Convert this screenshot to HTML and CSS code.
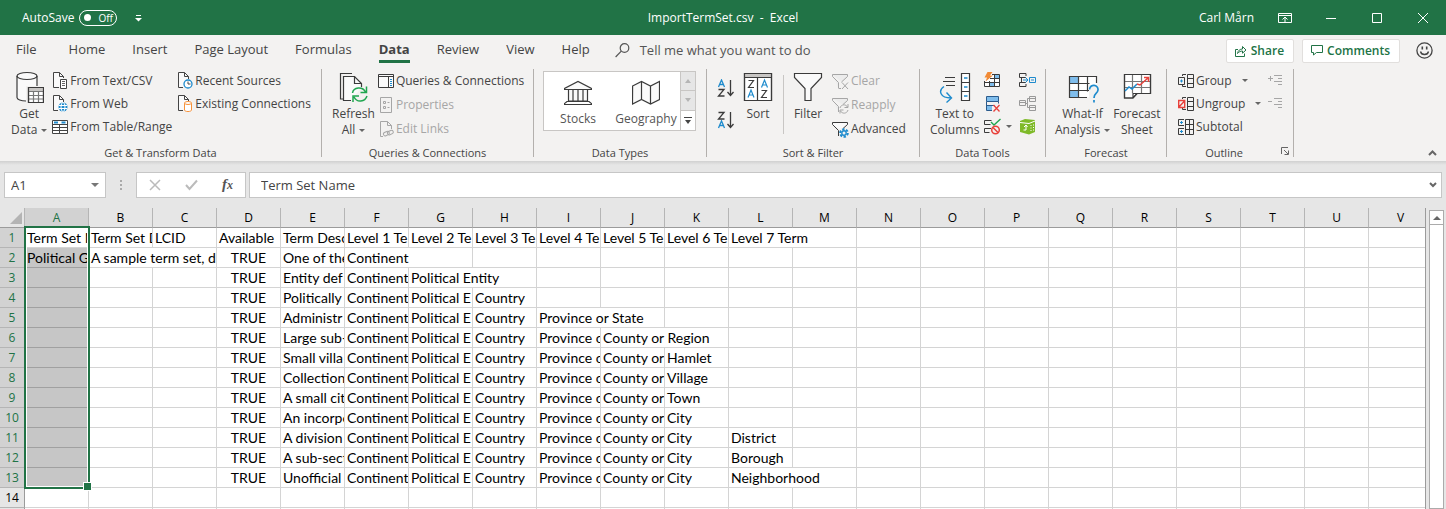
FILE: index.html
```html
<!DOCTYPE html>
<html lang="en">
<head>
    <meta charset="UTF-8">
    <meta name="viewport" content="width=device-width, initial-scale=1.0">
    <title>ImportTermSet.csv - Excel</title>
    <link rel="stylesheet" href="styles.css">
</head>
<body>
<header class="titlebar">
    <div class="titlebar-left">
        <label for="autosave">AutoSave</label>
        <span class="toggle"><input type="checkbox" id="autosave"><span>Off</span></span>
        <button class="qat" aria-label="Customize Quick Access Toolbar">
            <svg width="7" height="8" viewBox="0 0 7 8"><path d="M1 1.500h5" stroke="#fff"/><path d="M0 4h7L3.500 7.500z" fill="#fff"/></svg>
        </button>
    </div>
    <div class="titlebar-name">ImportTermSet.csv&nbsp; -&nbsp; Excel</div>
    <div class="titlebar-right">
        <span class="user">Carl Mårn</span>
        <button aria-label="Ribbon display options">
            <svg width="14" height="12" viewBox="0 0 14 12" fill="none" stroke="#fff"><path d="M.5 1.500h13v9H.5zM.5 3.500h13M7 10V5M4.500 7.500L7 5l2.500 2.500"/></svg>
        </button>
        <button aria-label="Minimize"><svg width="10" height="10" viewBox="0 0 10 10"><path d="M0 5.500h10" stroke="#fff"/></svg></button>
        <button aria-label="Maximize"><svg width="10" height="10" viewBox="0 0 10 10"><path d="M.5.5h9v9h-9z" stroke="#fff" fill="none"/></svg></button>
        <button aria-label="Close"><svg width="10" height="10" viewBox="0 0 10 10"><path d="M0 0l10 10M10 0L0 10" stroke="#fff"/></svg></button>
    </div>
</header>

<nav class="tabs">
    <a href="#">File</a>
    <a href="#">Home</a>
    <a href="#">Insert</a>
    <a href="#">Page Layout</a>
    <a href="#">Formulas</a>
    <a href="#" class="active">Data</a>
    <a href="#">Review</a>
    <a href="#">View</a>
    <a href="#">Help</a>
    <button class="tell-me">
        <svg width="15" height="15" viewBox="0 0 15 15" fill="none" stroke="#555" stroke-width="1.200"><circle cx="9.500" cy="5" r="4.300"/><path d="M6.300 8.200L.6 14"/></svg>
        Tell me what you want to do
    </button>
    <div class="tabs-right">
        <button class="card">
            <svg width="12" height="12" viewBox="0 0 12 12" fill="none" stroke="#217346"><path d="M3 4.500H.5v7h9V8.500"/><path d="M2.500 8.500C3 5.500 5 4 7.500 4V1.500L11 5 7.500 8.200V6C5.500 6 4 6.800 2.500 8.500z"/></svg>
            Share
        </button>
        <button class="card">
            <svg width="12" height="11" viewBox="0 0 12 11" fill="none" stroke="#217346"><path d="M.5.5h11v7H5.500L2.500 10V7.500h-2z"/></svg>
            Comments
        </button>
        <button class="smile" aria-label="Feedback">
            <svg width="17" height="17" viewBox="0 0 17 17" fill="none" stroke="#444" stroke-width="1.300"><circle cx="8.500" cy="8.500" r="7.600"/><path d="M4.500 9.500c.8 4 7.200 4 8 0"/><path d="M6.300 4.500v3M10.700 4.500v3" stroke-width="1.600"/></svg>
        </button>
    </div>
</nav>

<div class="ribbon">
    <section class="group group-get">
        <div class="group-body">
            <button class="big">
                <svg width="30" height="32" viewBox="0 0 30 32" fill="none" stroke="#3b3b3b" stroke-width="1.200"><path d="M3 5v22c0 2 4 3.500 9 3.500V15h11V5z" fill="#fafafa" stroke="none"/><ellipse cx="13" cy="5" rx="10" ry="3.500" fill="#fafafa"/><path d="M3 5v21.500c0 2 4 3.500 9 3.500M23 5v10"/><path d="M14.500 16.500h15v15h-15z" fill="#fff"/><path d="M15 17h14v3H15z" fill="#c8c6c4" stroke="none"/><path d="M14 20.500h16M14 24.500h16M14 28h16M19.500 20v11M24.500 20v11" stroke="#777"/><path d="M14.500 16.500h15v15h-15z"/></svg>
                <span>Get</span><span class="drop">Data</span>
            </button>
            <div class="stack">
                <button class="small">
                    <svg width="16" height="17" viewBox="0 0 16 17" fill="none" stroke="#444"><path d="M7 15.500H1.500v-15h6l4 4V6" fill="#fafafa"/><path d="M7.500.5v4h4"/><path d="M8.500 7.500h6v9h-6z" fill="#fff"/><path d="M10 9.500h3M10 11.500h3M10 13.500h3" stroke="#666"/></svg>
                    From Text/CSV
                </button>
                <button class="small">
                    <svg width="16" height="17" viewBox="0 0 16 17" fill="none" stroke="#444"><path d="M6 15.500H1.500v-15h6l4 4V7" fill="#fafafa"/><path d="M7.500.5v4h4"/><circle cx="11" cy="12" r="4.500" fill="#1e8bcd" stroke="none"/><path d="M7 10.500h8M7 13.500h8" stroke="#fff"/><ellipse cx="11" cy="12" rx="2" ry="4.500" stroke="#fff"/></svg>
                    From Web
                </button>
                <button class="small">
                    <svg width="16" height="16" viewBox="0 0 16 16" fill="none" stroke="#444"><path d="M.5 1.500h15v13H.5z" fill="#fff"/><path d="M2 3.500h4M9.500 3.500h4" stroke="#1e8bcd" stroke-width="2"/><path d="M.5 5.500h15M.5 8.500h15M.5 11.500h15M7.500 5v9"/></svg>
                    From Table/Range
                </button>
            </div>
            <div class="stack">
                <button class="small">
                    <svg width="16" height="17" viewBox="0 0 16 17" fill="none" stroke="#444"><path d="M6 15.500H1.500v-15h6l4 4V7" fill="#fafafa"/><path d="M7.500.5v4h4"/><circle cx="11" cy="12" r="4" fill="#fff" stroke="#1e8bcd" stroke-width="1.300"/><path d="M11 9.500V12h2.500"/></svg>
                    Recent Sources
                </button>
                <button class="small">
                    <svg width="16" height="17" viewBox="0 0 16 17" fill="none" stroke="#444"><path d="M6 15.500H1.500v-15h6l4 4V6" fill="#fafafa"/><path d="M7.500.5v4h4"/><path d="M7.500 8v7c0 2 7 2 7 0V8" fill="#fff" stroke="#f7923a"/><ellipse cx="11" cy="8" rx="3.500" ry="1.500" fill="#fff" stroke="#f7923a"/></svg>
                    Existing Connections
                </button>
            </div>
        </div>
        <h2>Get &amp; Transform Data</h2>
    </section>

    <section class="group group-queries">
        <div class="group-body">
            <button class="big">
                <svg width="30" height="32" viewBox="0 0 30 32" fill="none" stroke="#3b3b3b" stroke-width="1.200"><path d="M5.500 28H2.500V2.500H14"/><path d="M13 29.500H5.500v-24h11l7 7V16" fill="#fafafa"/><path d="M16.500 5.500v7h7"/><path d="M14.500 22c1-6 10-7 13-1M28.500 15.500v6h-6M29 25c-2 6-10 7-13 1M15 31v-6h6" stroke="#20a650" stroke-width="1.500"/></svg>
                <span>Refresh</span><span class="drop">All</span>
            </button>
            <div class="stack loose">
                <button class="small">
                    <svg width="16" height="16" viewBox="0 0 16 16" fill="none" stroke="#3b3b3b"><path d="M.5 1.500h15v13H.5z" fill="#fafafa"/><path d="M.5 3.500h15M10.500 4v10"/><path d="M12 6.500h2M12 8.500h2M12 10.500h2M12 12.500h2" stroke="#1e8bcd"/></svg>
                    Queries &amp; Connections
                </button>
                <button class="small" disabled>
                    <svg width="16" height="16" viewBox="0 0 16 16" fill="none" stroke="#a6a6a6"><path d="M2.500.5h11v15h-11z"/><path d="M5.500 4.500h2v2h-2zM5.500 9.500h2v2h-2zM9.500 5.500h2M9.500 10.500h2"/></svg>
                    Properties
                </button>
                <button class="small" disabled>
                    <svg width="16" height="16" viewBox="0 0 16 16" fill="none" stroke="#a6a6a6"><path d="M5 15.500H2.500V.5h7l4 4V8"/><path d="M9.500.5v4h4"/><rect x="5.500" y="11" width="6" height="3.500" rx="1.700" transform="rotate(-25 8 13)"/><rect x="9.500" y="10" width="6" height="3.500" rx="1.700" transform="rotate(-25 12 12)"/></svg>
                    Edit Links
                </button>
            </div>
        </div>
        <h2>Queries &amp; Connections</h2>
    </section>

    <section class="group group-types">
        <div class="group-body">
            <div class="gallery">
                <button class="tile">
                    <svg width="28" height="26" viewBox="0 0 28 26" fill="none" stroke="#3b3b3b" stroke-width="1.200"><path d="M.5 9.500v-1L14 1.500l13.500 7v1zM4.500 10v11h19V10" fill="#fafafa"/><path d="M9 10v11M14 10v11M19 10v11M2.500 21.500h23M.5 24.500h27v-1L25 21.500H3L.5 23.500z"/></svg>
                    <span>Stocks</span>
                </button>
                <button class="tile">
                    <svg width="28" height="26" viewBox="0 0 28 26" fill="none" stroke="#3b3b3b" stroke-width="1.200"><path d="M.6 6L9.500 1.500 18.500 6l9-4.500v18l-9 4.500-9-4.500-9 4.500zM9.500 1.500v18M18.500 6v18" fill="#fafafa"/></svg>
                    <span>Geography</span>
                </button>
                <div class="gallery-scroll">
                    <button disabled aria-label="Previous row"><svg width="6" height="4" viewBox="0 0 6 4"><path d="M0 4l3-4 3 4z" fill="#b5b5b5"/></svg></button>
                    <button disabled aria-label="Next row"><svg width="6" height="4" viewBox="0 0 6 4"><path d="M0 0l3 4 3-4z" fill="#b5b5b5"/></svg></button>
                    <button aria-label="More data types"><svg width="8" height="7" viewBox="0 0 8 7"><path d="M0 .5h8" stroke="#444"/><path d="M1 3l3 4 3-4z" fill="#444"/></svg></button>
                </div>
            </div>
        </div>
        <h2>Data Types</h2>
    </section>

    <section class="group group-sort">
        <div class="group-body">
            <div class="sorts">
                <button aria-label="Sort A to Z">
                    <svg width="18" height="18" viewBox="0 0 18 18" fill="none" stroke="#3b3b3b" stroke-width="1.300"><path d="M1.500 8L4.500 1l3 7M2.500 5.500h4" stroke="#1e8bcd"/><path d="M1.500 10.500h5.500L1.500 17h6M13.500 1v15M10.500 13l3 3.500 3-3.500"/></svg>
                </button>
                <button aria-label="Sort Z to A">
                    <svg width="18" height="18" viewBox="0 0 18 18" fill="none" stroke="#3b3b3b" stroke-width="1.300"><path d="M1.500 17l3-7 3 7M2.500 14.500h4" stroke="#1e8bcd"/><path d="M1.500 1.500h5.500L1.500 8h6M13.500 1v15M10.500 13l3 3.500 3-3.500"/></svg>
                </button>
            </div>
            <button class="big">
                <svg width="30" height="32" viewBox="0 0 30 32" fill="none" stroke="#3b3b3b" stroke-width="1.200"><path d="M1.500 2.500h27v27h-27z" fill="#fff"/><path d="M2 3h26v3.500H2z" fill="#c8c6c4" stroke="none"/><path d="M1.500 2.500h27v27h-27zM1.500 6.500h27M14.500 7v23M5.500 9.500h5l-5 7h5.500M18.500 19.500h5l-5 7h5.500"/><path d="M5 26.500l3-7.500 3 7.500M6 24h4M18.500 16.500l3-7.500 3 7.500M19.500 14h4" stroke="#1e8bcd"/></svg>
                <span>Sort</span>
            </button>
            <div class="rule"></div>
            <button class="big">
                <svg width="30" height="32" viewBox="0 0 30 32"><path d="M1.500 2.500h27v4l-10.500 11v12h-6v-12L1.500 6.500z" fill="#fafafa" stroke="#3b3b3b" stroke-width="1.200"/></svg>
                <span>Filter</span>
            </button>
            <div class="stack loose">
                <button class="small" disabled>
                    <svg width="17" height="17" viewBox="0 0 17 17" fill="none" stroke="#a6a6a6"><path d="M.5 1.500h15v2L9.500 9M6.500 15V9.500L.5 3.500v-2M9 15.500H6.500" fill="#ececec"/><path d="M10 9.500l6 6.500M16 9.500L10 16"/></svg>
                    Clear
                </button>
                <button class="small" disabled>
                    <svg width="17" height="17" viewBox="0 0 17 17" fill="none" stroke="#a6a6a6"><path d="M.5 1.500h15v2L11 7.500M6.500 15V9.500L.5 3.500v-2" fill="#ececec"/><path d="M8 11c1-4 6-4 7.500-1M16 7v3.500h-3.500M16 13c-1 4-6 4-7.500 1M8 16.500V13h3.500"/></svg>
                    Reapply
                </button>
                <button class="small">
                    <svg width="17" height="17" viewBox="0 0 17 17" fill="none" stroke="#3b3b3b"><path d="M.5 1.500h15v2L11 7.500H6.500L.5 3.500z" fill="#fafafa" stroke="none"/><path d="M11 7.500l4.500-4v-2H.5v2l6 6V15"/><circle cx="12" cy="12" r="3.800" stroke="#1e8bcd" stroke-width="2" stroke-dasharray="2.400 1.500"/><circle cx="12" cy="12" r="2.200" stroke="#1e8bcd" stroke-width="1.400"/></svg>
                    Advanced
                </button>
            </div>
        </div>
        <h2>Sort &amp; Filter</h2>
    </section>

    <section class="group group-tools">
        <div class="group-body">
            <button class="big">
                <svg width="32" height="32" viewBox="0 0 32 32" fill="none" stroke="#3b3b3b" stroke-width="1.200"><path d="M6 6.500h10M4 10.500h12M7 14.500h9"/><path d="M22.500 2.500h8v27h-8z" fill="#fff"/><path d="M22.500 11.500h8M22.500 20.500h8"/><path d="M25 7h3.500M25 16h3.500M25 25h3.500M5 15.500c-6 4-4 11.500 7 11.500M7.500 21.500l5 5.500-5 4.500" stroke="#1e8bcd" stroke-width="1.400"/></svg>
                <span>Text to</span><span>Columns</span>
            </button>
            <div class="tools">
                <button aria-label="Flash Fill">
                    <svg width="17" height="17" viewBox="0 0 17 17" fill="none"><path d="M6.500 2.500h9v12h-15V9" fill="#fff"/><path d="M6 11h5v3H6zM11 3h4v3h-4z" fill="#7fbdec"/><path d="M8 2.500h7.500v12H.5V9M.5 10.500h15M6 6.500h9.500M5.500 9v5.500M10.500 2.500v12" stroke="#3b3b3b"/><path d="M3.500 0h5L6 3.500h3L1.500 9.500l1.500-4H.5z" fill="#f18a35"/></svg>
                </button>
                <button aria-label="Consolidate">
                    <svg width="17" height="17" viewBox="0 0 17 17" fill="none" stroke="#3b3b3b"><path d="M7 4V1.500H.5v4H7M7 12v2.500H.5v-4H7M2.500 5.500v5"/><path d="M4 8h5M6.500 5.500L9 8l-2.500 2.500M10.500 5.500h6v5h-6zM12 8h3" stroke="#1e8bcd"/></svg>
                </button>
                <button aria-label="Remove Duplicates">
                    <svg width="17" height="17" viewBox="0 0 17 17" fill="none"><path d="M3 2h11v5H3zM3 11h5v5H3z" fill="#7fbdec"/><path d="M2.500 1.500h12v5h-12zM2.500 6.500v9H8M2.500 10.500h8M14.500 6.500v2" stroke="#2b5b8c"/><path d="M9.500 10l6 6.500M15.500 10l-6 6.500" stroke="#e8413b" stroke-width="1.300"/></svg>
                </button>
                <button disabled aria-label="Relationships">
                    <svg width="17" height="17" viewBox="0 0 17 17" fill="none" stroke="#999"><path d="M.5 5.500h6v5h-6zM10.500 1.500h6v5h-6zM10.500 10.500h6v5h-6zM6.500 8.500H8.500V3.500h2M8.500 8.500v4h2M10.500 3.500h6M10.500 12.500h6M.5 7.500h6"/></svg>
                </button>
                <button class="drop" aria-label="Data Validation">
                    <svg width="17" height="17" viewBox="0 0 17 17" fill="none"><path d="M7.500 2.500h-7v4h6M7 10.500H.5v4h5" stroke="#3b3b3b"/><path d="M7 4l3 3 6.500-6" stroke="#20a650" stroke-width="1.400"/><circle cx="11.500" cy="12" r="3.800" stroke="#e8413b" stroke-width="1.500"/><path d="M9 9.500l5 5" stroke="#e8413b" stroke-width="1.500"/></svg>
                </button>
                <button aria-label="Manage Data Model">
                    <svg width="17" height="17" viewBox="0 0 17 17" fill="none"><path d="M1 3l5-2 10 1v12l-6 2.500L1 14z" fill="#7fba29"/><path d="M1 4.500l9 1 6-2.500M11.500 7.500h1M14 7h1M11.500 10h1M14 9.500h1M11.500 12.500h1M14 12h1M7 7v5H4.500M5 9l2-2 1.500 2" stroke="#fff"/></svg>
                </button>
            </div>
        </div>
        <h2>Data Tools</h2>
    </section>

    <section class="group group-forecast">
        <div class="group-body">
            <button class="big">
                <svg width="32" height="32" viewBox="0 0 32 32" fill="none" stroke="#3b3b3b" stroke-width="1.200"><path d="M2.500 5.500h27v21h-27z" fill="#fff" stroke="none"/><path d="M3 6h8v6H3zM3 19h8v7H3z" fill="#7fbdec" stroke="none"/><path d="M20 26.500H2.500v-21h27V12M2.500 12.500h20M2.500 19.500h20M11.500 5.500v21M20.500 5.500v15"/><path d="M22 27h9V14h-9z" fill="#f3f2f1" stroke="none"/><path d="M22.500 18.500c.5-6 9-5 8.500.5-.5 4-4 3-4 8M27 29v2.500" stroke="#1e8bcd" stroke-width="1.700"/></svg>
                <span>What-If</span><span class="drop">Analysis</span>
            </button>
            <button class="big">
                <svg width="30" height="32" viewBox="0 0 30 32" fill="none" stroke="#3b3b3b" stroke-width="1.200"><path d="M2.500 3.500h26v19H15l-4 4.500H2.500z" fill="#fff"/><path d="M3 10.500h25M3 16.500h25M10.500 4v18M19.500 4v18" stroke="#777"/><path d="M2.500 3.500h26v19H15l-4 4.500H2.500zM11 27v-4.500h5"/><path d="M3 20l4-4 3 2 5-5" stroke="#1e8bcd" stroke-width="1.500"/><path d="M15 13l3 1 8-7M22 6.500h4.500V11" stroke="#e8413b" stroke-width="1.500"/></svg>
                <span>Forecast</span><span>Sheet</span>
            </button>
        </div>
        <h2>Forecast</h2>
    </section>

    <section class="group group-outline">
        <div class="group-body">
            <div class="stack">
                <button class="small drop">
                    <svg width="16" height="16" viewBox="0 0 16 16" fill="none" stroke="#3b3b3b"><path d="M9.500 1.500h6v13h-6zM9.500 5.500h6M9.500 10.500h6M8 1.500H4.500V3M8 13.500H4.500V12M.5 4.500h6v7h-6z"/><path d="M2 8h3M3.500 6.500v3" stroke="#1e8bcd"/></svg>
                    Group
                </button>
                <button class="small drop">
                    <svg width="16" height="16" viewBox="0 0 16 16" fill="none" stroke="#3b3b3b"><path d="M9.500 1.500h6v13h-6zM9.500 5.500h6M9.500 10.500h6M8 1.500H4.500V3M8 13.500H4.500V12"/><path d="M.7 4.500h6v7h-6zM1 11l5.500-6" stroke="#e8413b" stroke-width="1.400"/></svg>
                    Ungroup
                </button>
                <button class="small">
                    <svg width="16" height="16" viewBox="0 0 16 16" fill="none" stroke="#3b3b3b"><path d="M7.500.5h8v15h-8zM7.500 5.500h8M7.500 10.500h8M11.500.5v15M6 .5H.5v6H6M6 9.500H.5v6H6"/><path d="M2 3.500h3M3.500 2v3M2 12.500h3M3.500 11v3" stroke="#1e8bcd"/></svg>
                    Subtotal
                </button>
            </div>
            <div class="stack">
                <button class="small" disabled aria-label="Show Detail"><svg width="16" height="16" viewBox="0 0 16 16" stroke="#a6a6a6"><path d="M0 5.500h5M2.500 3v5M6 2.500h8M10 5.500h4M6 8.500h8M10 11.500h4"/></svg></button>
                <button class="small" disabled aria-label="Hide Detail"><svg width="16" height="16" viewBox="0 0 16 16" stroke="#a6a6a6"><path d="M0 5.500h4M6 2.500h8M10 5.500h4M6 8.500h8M10 11.500h4"/></svg></button>
            </div>
        </div>
        <div class="group-foot">
            <h2>Outline</h2>
            <button class="launcher" aria-label="Outline settings"><svg width="8" height="8" viewBox="0 0 8 8" fill="none" stroke="#666"><path d="M.5 7V.5H7M3 3l4 4M7.500 3.500v4h-4"/></svg></button>
        </div>
    </section>
    <button class="collapse" aria-label="Collapse the ribbon"><svg width="9" height="6" viewBox="0 0 9 6"><path d="M1 5l3.500-3.500L8 5" fill="none" stroke="#666" stroke-width="2"/></svg></button>
</div>

<div class="formula-bar">
    <div class="name-box">
        <input type="text" value="A1" aria-label="Name box">
        <button aria-label="Show names"><svg width="8" height="4" viewBox="0 0 8 4"><path d="M0 0h8L4 4z" fill="#777"/></svg></button>
    </div>
    <svg class="grip" width="2" height="12" viewBox="0 0 2 12" fill="#aaa"><path d="M0 1h2v2H0zM0 5h2v2H0zM0 9h2v2H0z"/></svg>
    <div class="entry">
        <button disabled aria-label="Cancel"><svg width="12" height="12" viewBox="0 0 12 12" fill="none" stroke="#bbb" stroke-width="1.500"><path d="M1 1l10 10M11 1L1 11"/></svg></button>
        <button disabled aria-label="Enter"><svg width="13" height="12" viewBox="0 0 13 12" fill="none" stroke="#bbb" stroke-width="2"><path d="M1 6l3.500 4L12 1.500"/></svg></button>
        <button class="fx" aria-label="Insert function">f<sub>x</sub></button>
    </div>
    <div class="formula">
        <input type="text" value="Term Set Name" aria-label="Formula">
        <button aria-label="Expand formula bar"><svg width="8" height="6" viewBox="0 0 8 6"><path d="M1 1l3 3 3-3" fill="none" stroke="#666" stroke-width="2"/></svg></button>
    </div>
</div>

<main class="workbook">
    <div class="sheet">
        <table id="grid"></table>
        <div class="selection"></div>
    </div>
    <div class="scrollbar">
        <button aria-label="Scroll up"><svg width="8" height="4" viewBox="0 0 8 4"><path d="M0 4l4-4 4 4z" fill="#666"/></svg></button>
    </div>
</main>
<script src="grid.js"></script>
</body>
</html>
```

FILE: styles.css
```css
* {
    box-sizing: border-box;
}
body {
    display: flex;
    flex-direction: column;
    height: 100vh;
    margin: 0;
    overflow: hidden;
    background-color: #e6e6e6;
    color: #444;
    font-family: "Open Sans", "Noto Sans", sans-serif;
    font-size: 12px;
    line-height: 16px;
}
button, input {
    margin: 0;
    padding: 0;
    border: 0;
    background: none;
    color: inherit;
    font: inherit;
}
svg {
    display: block;
    flex: none;
}
h2 {
    margin: 0;
    font-size: 11px;
    font-weight: normal;
    text-align: center;
}

/* Title bar */
.titlebar {
    display: grid;
    grid-template-columns: 1fr auto 1fr;
    align-items: center;
    flex: none;
    height: 35px;
    background-color: #217346;
    color: #fff;
}
.titlebar-left {
    display: flex;
    align-items: center;
    gap: 5px;
    padding-left: 22px;
}
.toggle {
    display: flex;
    align-items: center;
    gap: 7px;
    width: 38px;
    height: 16px;
    padding-left: 4px;
    border: 1px solid #fff;
    border-radius: 8px;
    font-size: 10px;
}
.toggle input {
    width: 7px;
    height: 7px;
    border-radius: 50%;
    background-color: #fff;
    appearance: none;
}
.qat {
    margin-left: 13px;
}
.titlebar-right {
    display: flex;
    justify-content: flex-end;
    align-items: center;
}
.titlebar-right button {
    display: flex;
    justify-content: center;
    width: 46px;
}
.user {
    margin-right: 8px;
}

/* Ribbon tabs */
.tabs {
    display: flex;
    align-items: center;
    flex: none;
    height: 31px;
    background-color: #f3f2f1;
    font-size: 13px;
}
.tabs a {
    margin: 0 13px 0 14px;
    border-bottom: 3px solid transparent;
    padding: 3px 0;
    color: #444;
    text-decoration: none;
}
.tabs a:first-child {
    margin: 0 18px 0 16px;
}
.tabs .active {
    border-bottom-color: #217346;
    font-weight: bold;
}
.tell-me {
    display: flex;
    align-items: center;
    gap: 10px;
    margin-left: 12px;
    padding-bottom: 1px;
    color: #555;
}
.tabs-right {
    display: flex;
    align-items: center;
    gap: 8px;
    margin-left: auto;
    padding-right: 13px;
}
.card {
    display: flex;
    align-items: center;
    gap: 4px;
    height: 24px;
    padding: 0 9px 0 8px;
    border: 1px solid #e1dfdd;
    border-radius: 2px;
    background-color: #fff;
    color: #217346;
    font-size: 12px;
    font-weight: 600;
}
.smile {
    margin-left: 8px;
}

/* Ribbon */
.ribbon {
    display: flex;
    align-items: flex-start;
    flex: none;
    height: 95px;
    padding-top: 3px;
    background-color: #f3f2f1;
}
.group {
    display: flex;
    flex-direction: column;
    justify-content: space-between;
    flex: none;
    height: 88px;
    border-right: 1px solid #b3b0ad;
}
.group-get { width: 322px; }
.group-queries { width: 212px; }
.group-types { width: 173px; }
.group-sort { width: 213px; }
.group-tools { width: 126px; }
.group-forecast { width: 121px; }
.group-outline { width: 127px; }
.group h2 {
    height: 12px;
}
.group-body {
    display: flex;
    align-items: flex-start;
}
.big {
    display: flex;
    flex-direction: column;
    align-items: center;
    padding-top: 2px;
    white-space: nowrap;
}
.big svg {
    margin-bottom: 3px;
}
.small {
    display: flex;
    align-items: center;
    gap: 2px;
    height: 23px;
    white-space: nowrap;
}
.loose .small {
    height: 24px;
}
button:disabled {
    color: #a6a6a6;
}
.drop::after {
    content: "";
    display: inline-block;
    margin-left: 4px;
    border: 3px solid transparent;
    border-top-color: #666;
    border-bottom-width: 0;
    vertical-align: middle;
}
.small.drop::after {
    margin-left: 8px;
}
.group-get .group-body {
    gap: 5px;
    padding-left: 11px;
}
.group-queries .group-body {
    gap: 3px;
    padding-left: 10px;
}
.gallery {
    display: flex;
    margin: 2px 0 0 9px;
    border: 1px solid #c8c6c4;
    background-color: #fff;
}
.tile {
    display: flex;
    flex-direction: column;
    align-items: center;
    gap: 5px;
    width: 68px;
    height: 58px;
    padding-top: 8px;
    color: #555;
}
.gallery-scroll {
    display: grid;
    grid-template-rows: repeat(3, 1fr);
    width: 15px;
    border-left: 1px solid #c8c6c4;
}
.gallery-scroll button {
    display: grid;
    place-items: center;
}
.gallery-scroll button:disabled {
    border-bottom: 1px solid #c8c6c4;
    background-color: #e6e6e6;
}
.group-sort .group-body {
    padding-left: 10px;
}
.sorts {
    display: grid;
    gap: 14px;
    margin-right: 8px;
    padding-top: 10px;
}
.rule {
    width: 1px;
    height: 59px;
    margin: 6px 9px 0 10px;
    background-color: #c8c6c4;
}
.group-sort .stack {
    margin-left: 9px;
}
.group-tools .group-body {
    gap: 5px;
    padding-left: 10px;
}
.tools {
    display: grid;
    grid-template-columns: 35px 17px;
    grid-auto-rows: 23px;
    align-items: center;
}
.tools button {
    display: flex;
    align-items: center;
}
.tools .drop::after {
    margin-left: 5px;
}
.group-forecast .group-body {
    gap: 3px;
    padding-left: 9px;
}
.group-outline .group-body {
    gap: 7px;
    padding-left: 11px;
}
.group-foot {
    display: flex;
    align-items: center;
}
.group-foot h2 {
    flex: 1;
    padding-left: 0;
}
.launcher {
    margin-right: 4px;
}
.collapse {
    align-self: flex-end;
    margin: 0 9px 5px auto;
}

/* Formula bar */
.formula-bar {
    display: flex;
    align-items: center;
    flex: none;
    height: 47px;
    padding: 0 4px;
    background-image: linear-gradient(#d0d0d0, #e6e6e6 4px);
    font-size: 13px;
}
.name-box, .entry, .formula {
    display: flex;
    align-items: center;
    height: 26px;
    border: 1px solid #c6c6c6;
    background-color: #fff;
}
.name-box {
    width: 102px;
    padding: 0 6px;
}
.name-box input, .formula input {
    flex: 1;
    min-width: 0;
}
.grip {
    margin: 0 14px;
}
.entry {
    justify-content: space-around;
    width: 110px;
    margin-right: 3px;
}
.fx {
    color: #555;
    font-family: "Liberation Serif", serif;
    font-size: 15px;
    font-style: italic;
    font-weight: bold;
}
.fx sub {
    font-size: 12px;
    vertical-align: baseline;
}
.formula {
    flex: 1;
    padding: 0 4px 0 11px;
}

/* Worksheet */
.workbook {
    display: flex;
    flex: 1;
    min-height: 0;
}
.sheet {
    position: relative;
    flex: 1;
    overflow: hidden;
    border-right: 1px solid #9b9b9b;
}
/* the last column runs on past the edge of the sheet */
#grid {
    width: calc(100% + 8px);
    border-spacing: 0;
    table-layout: fixed;
    background-color: #fff;
    color: #000;
    font-family: Lato, sans-serif;
    font-size: 14px;
}
#grid col {
    width: 64px;
}
#grid .row-col {
    width: 25px;
}
#grid .last-col {
    width: auto;
}
#grid th, #grid td {
    height: 20px;
    padding: 0;
    line-height: 19px;
}
#grid th {
    border-right: 1px solid #b5b5b5;
    border-bottom: 1px solid #b5b5b5;
    background-color: #e6e6e6;
    font-family: "Open Sans", sans-serif;
    font-size: 12px;
    font-weight: normal;
}
#grid thead th {
    border-bottom-color: #9b9b9b;
}
#grid tbody th {
    border-right-color: #9b9b9b;
}
#grid .picked {
    background-color: #d2d2d2;
    color: #217346;
}
#grid td {
    padding-left: 2px;
    border-right: 1px solid #d4d4d4;
    border-bottom: 1px solid #d4d4d4;
    overflow: hidden;
    white-space: nowrap;
}
#grid .center {
    padding: 0;
    text-align: center;
}
#grid .shaded {
    border-bottom-color: #a0a0a0;
    background-color: #c6c6c6;
}
.corner svg {
    margin: 0 2px 0 auto;
}
/* A1:A13 */
.selection {
    position: absolute;
    top: 18px;
    left: 24px;
    width: 66px;
    height: 263px;
    border: 2px solid #217346;
    box-shadow: inset 0 0 0 1px #fff;
}
.selection::after {
    content: "";
    position: absolute;
    right: -4px;
    bottom: -4px;
    width: 7px;
    height: 7px;
    border: 1px solid #fff;
    background-color: #217346;
}
.scrollbar {
    width: 15px;
    margin: 2px 2px 0 3px;
    border: 1px solid #ababab;
    background-color: #fff;
}
.scrollbar button {
    display: grid;
    place-items: center;
    width: 100%;
    height: 14px;
    border-bottom: 1px solid #ababab;
}
```

FILE: grid.js
```js
const columns = "ABCDEFGHIJKLMNOPQRSTUV".split("");
const rowCount = 15;
const selectedRows = 13;

const level = ["Continent", "Political E", "Country", "Province o"];
const row = (description, ...levels) => ["", "", "", "TRUE", description, ...levels];

const rows = [
    ["Term Set N", "Term Set D", "LCID", "Available", "Term Desc",
        "Level 1 Te", "Level 2 Te", "Level 3 Te", "Level 4 Te", "Level 5 Te", "Level 6 Te", "Level 7 Term"],
    ["Political G", "A sample term set, d", "", "TRUE", "One of the", "Continent"],
    row("Entity def", "Continent", "Political Entity"),
    row("Politically", ...level.slice(0, 3)),
    row("Administr", ...level.slice(0, 3), "Province or State"),
    row("Large sub-", ...level, "County or Region"),
    row("Small villa", ...level, "County or", "Hamlet"),
    row("Collection", ...level, "County or", "Village"),
    row("A small cit", ...level, "County or", "Town"),
    row("An incorpo", ...level, "County or", "City"),
    row("A division", ...level, "County or", "City", "District"),
    row("A sub-sect", ...level, "County or", "City", "Borough"),
    row("Unofficial", ...level, "County or", "City", "Neighborhood")
];

// Long text runs on over the next cell when that one is empty
const spills = ["B2", "F2", "G3", "I5", "J6", "L1", "L13"];

const corner = '<svg width="12" height="12" viewBox="0 0 12 12"><path d="M12 0v12H0z" fill="#b4b4b4"/></svg>';

let html = '<colgroup><col class="row-col">' + "<col>".repeat(columns.length - 1) + '<col class="last-col"></colgroup>';
html += `<thead><tr><th class="corner">${corner}</th>`;
columns.forEach((name) => {
    html += `<th${name === "A" ? ' class="picked"' : ""}>${name}</th>`;
});
html += "</tr></thead><tbody>";

for (let r = 1; r <= rowCount; r++) {
    html += `<tr><th${r <= selectedRows ? ' class="picked"' : ""}>${r}</th>`;
    for (let c = 0; c < columns.length; c++) {
        const text = (rows[r - 1] || [])[c] || "";
        const spill = spills.includes(columns[c] + r);
        let name = "";
        if (c === 0 && r > 1 && r <= selectedRows) name = "shaded";
        if (text === "TRUE") name = "center";
        html += `<td${name && ` class="${name}"`}${spill ? ' colspan="2"' : ""}>${text}</td>`;
        if (spill) c++;
    }
    html += "</tr>";
}

document.getElementById("grid").innerHTML = html + "</tbody>";
```
